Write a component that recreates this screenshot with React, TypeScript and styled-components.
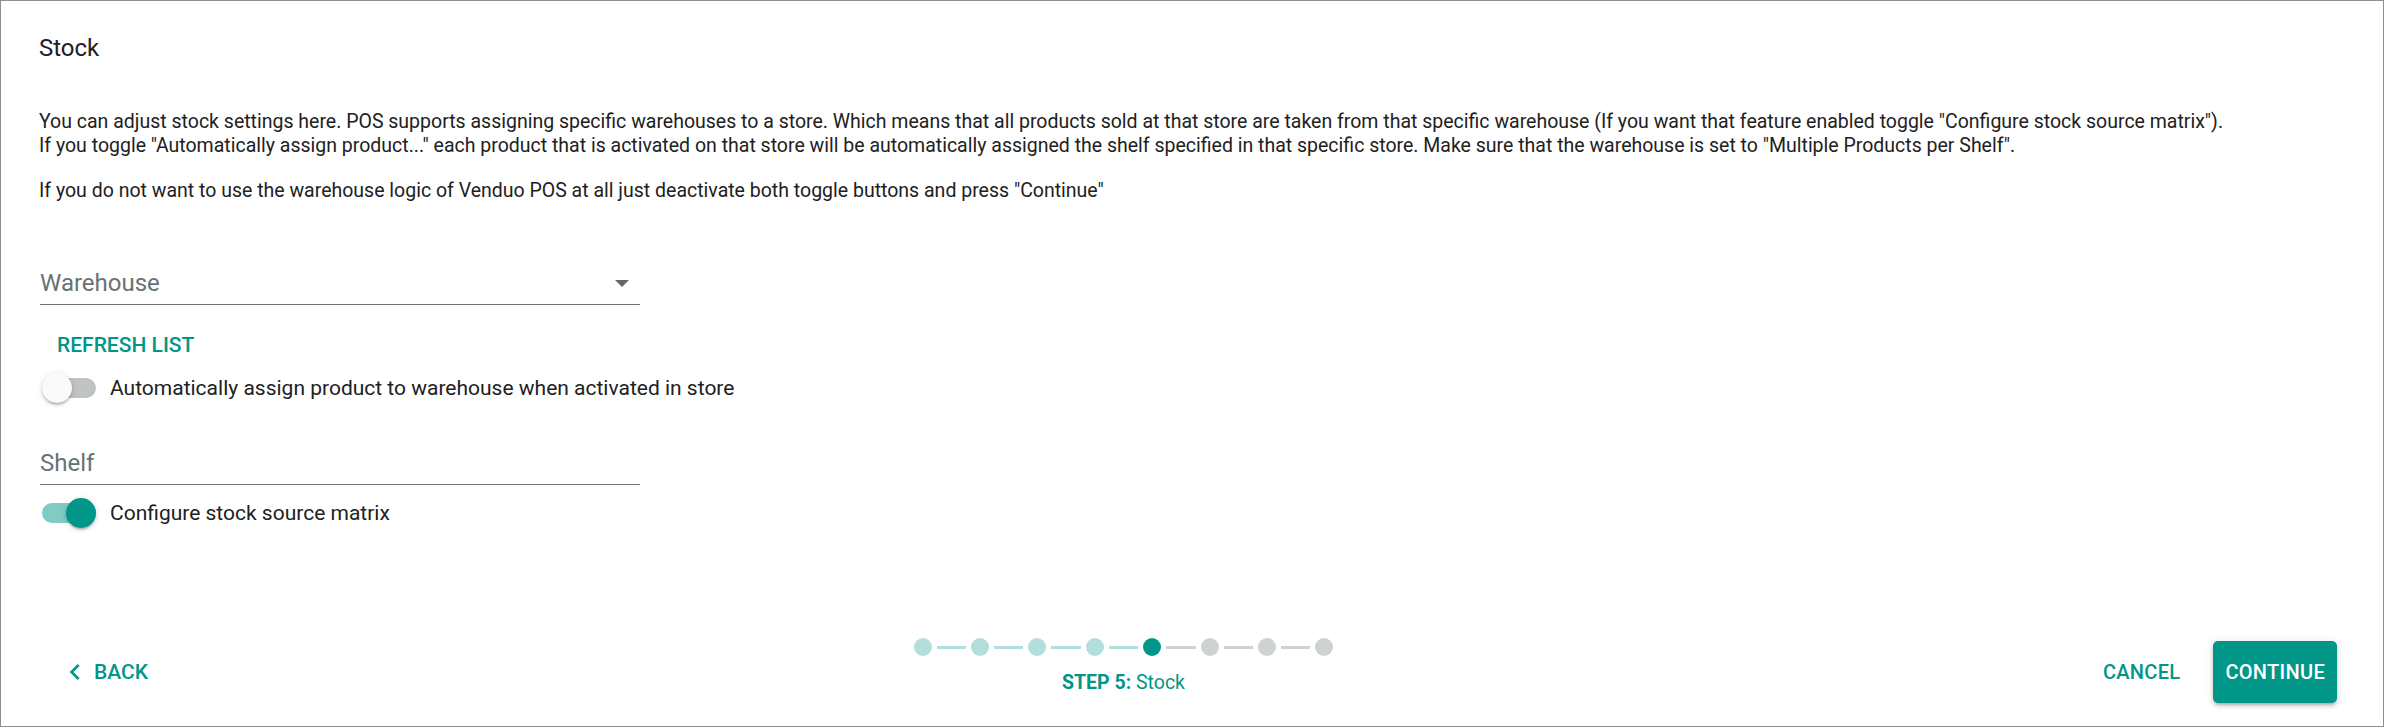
import styled, { createGlobalStyle } from "styled-components";

const GlobalStyle = createGlobalStyle`
    html, body {
        margin: 0;
        padding: 0;
        background: #ffffff;
    }
    body {
        font-family: Roboto, "Noto Sans", "Liberation Sans", sans-serif;
        color: #212121;
    }
    * {
        box-sizing: border-box;
    }
`

const STEPS = 8;
const CURRENT = 5;

const App = () => {
    return (
        <>
            <GlobalStyle />
            <Dialog>
                <Content>
                    <Title>Stock</Title>
                    <Paragraph>
                        You can adjust stock settings here. POS supports assigning specific warehouses to a store. Which means that all products sold at that store are taken from that specific warehouse (If you want that feature enabled toggle "Configure stock source matrix").
                        <br />
                        If you toggle "Automatically assign product..." each product that is activated on that store will be automatically assigned the shelf specified in that specific store. Make sure that the warehouse is set to "Multiple Products per Shelf".
                    </Paragraph>
                    <Paragraph $gap={21}>
                        If you do not want to use the warehouse logic of Venduo POS at all just deactivate both toggle buttons and press "Continue"
                    </Paragraph>

                    <Field $gap={66}>
                        <FieldLabel>Warehouse</FieldLabel>
                        <SelectArrow />
                    </Field>
                    <TextButton>REFRESH LIST</TextButton>
                    <ToggleRow $gap={10}>
                        <Track $on={false}>
                            <Thumb $on={false} />
                        </Track>
                        <ToggleLabel>Automatically assign product to warehouse when activated in store</ToggleLabel>
                    </ToggleRow>

                    <Field $gap={46}>
                        <FieldLabel>Shelf</FieldLabel>
                    </Field>
                    <ToggleRow $gap={13}>
                        <Track $on={true}>
                            <Thumb $on={true} />
                        </Track>
                        <ToggleLabel>Configure stock source matrix</ToggleLabel>
                    </ToggleRow>
                </Content>

                <Footer>
                    <BackButton>
                        <svg width="32" height="32" viewBox="0 0 24 24" fill="#009688">
                            <path d="M15.41 7.41L14 6l-6 6 6 6 1.41-1.41L10.83 12z" />
                        </svg>
                        BACK
                    </BackButton>

                    <Stepper>
                        <Dots>
                            {Array.from({ length: STEPS }).map((_, i) => {
                                const step = i + 1;
                                const state = step < CURRENT ? "done" : step === CURRENT ? "active" : "todo";
                                return (
                                    <DotGroup key={i}>
                                        {i > 0 && <Line $done={step <= CURRENT} />}
                                        <Dot $state={state} />
                                    </DotGroup>
                                );
                            })}
                        </Dots>
                        <StepLabel>
                            <b>STEP {CURRENT}:</b> Stock
                        </StepLabel>
                    </Stepper>

                    <Actions>
                        <TextButton $footer>CANCEL</TextButton>
                        <PrimaryButton>CONTINUE</PrimaryButton>
                    </Actions>
                </Footer>
            </Dialog>
        </>
    );
};

export default App;

const Dialog = styled.div`
    display: flex;
    flex-direction: column;
    width: 100vw;
    height: 100vh;
    border: 1px solid #8e8e8e;
    background: #ffffff;
    overflow: hidden;
`

const Content = styled.div`
    flex: 1;
    display: flex;
    flex-direction: column;
    align-items: flex-start;
    padding: 33px 40px 0 38px;
`

const Title = styled.h2`
    margin: 0;
    font-size: 24px;
    font-weight: 400;
    line-height: 28px;
    color: #212121;
`

const Paragraph = styled.p<{ $gap?: number }>`
    margin: ${(p) => p.$gap ?? 48}px 0 0 0;
    font-size: 19.5px;
    line-height: 24px;
    color: #212121;
`

const Field = styled.div<{ $gap: number }>`
    position: relative;
    display: flex;
    align-items: center;
    justify-content: space-between;
    width: 600px;
    margin-top: ${(p) => p.$gap}px;
    margin-left: 1px;
    padding: 0 11px 7px 0;
    border-bottom: 1px solid #6b7676;
`

const FieldLabel = styled.span`
    font-size: 24px;
    line-height: 28px;
    color: #687272;
`

const SelectArrow = styled.span`
    width: 0;
    height: 0;
    border-left: 7px solid transparent;
    border-right: 7px solid transparent;
    border-top: 7px solid #5f6a6a;
    margin-top: 1px;
`

const TextButton = styled.button<{ $footer?: boolean }>`
    border: none;
    background: transparent;
    font-family: Roboto, "Liberation Sans", sans-serif;
    font-size: ${(p) => (p.$footer ? "20px" : "21px")};
    font-weight: 500;
    letter-spacing: ${(p) => (p.$footer ? "0.3px" : "0")};
    color: #009688;
    height: 36px;
    line-height: 36px;
    padding: 0 12px;
    margin: ${(p) => (p.$footer ? "0 21px 0 0" : "22px 0 0 6px")};
    cursor: pointer;
`

const ToggleRow = styled.div<{ $gap: number }>`
    display: flex;
    align-items: center;
    height: 30px;
    margin-top: ${(p) => p.$gap}px;
    margin-left: 3px;
`

const Track = styled.div<{ $on: boolean }>`
    position: relative;
    width: 54px;
    height: 20px;
    border-radius: 10px;
    background: ${(p) => (p.$on ? "#80cbc4" : "#bfc3c3")};
`

const Thumb = styled.div<{ $on: boolean }>`
    position: absolute;
    top: -5px;
    left: ${(p) => (p.$on ? "24px" : "0")};
    width: 30px;
    height: 30px;
    border-radius: 50%;
    background: ${(p) => (p.$on ? "#009688" : "#fafafa")};
    box-shadow: 0 3px 2px -2px rgba(0, 0, 0, 0.2), 0 2px 3px 0 rgba(0, 0, 0, 0.14), 0 1px 6px 0 rgba(0, 0, 0, 0.12);
`

const ToggleLabel = styled.span`
    margin-left: 14px;
    font-size: 21px;
    line-height: 24px;
    color: #212121;
`

const Footer = styled.div`
    display: flex;
    align-items: center;
    justify-content: space-between;
    height: 108px;
    padding: 0 46px 0 58px;
`

const BackButton = styled.button`
    display: flex;
    align-items: center;
    gap: 3px;
    border: none;
    background: transparent;
    padding: 0 8px 0 0;
    font-family: Roboto, "Liberation Sans", sans-serif;
    font-size: 21px;
    font-weight: 500;
    color: #009688;
    cursor: pointer;
`

const Stepper = styled.div`
    display: flex;
    flex-direction: column;
    align-items: center;
    gap: 16px;
    margin-bottom: 12px;
`

const Dots = styled.div`
    display: flex;
    align-items: center;
`

const DotGroup = styled.div`
    display: flex;
    align-items: center;
`

const Dot = styled.span<{ $state: "done" | "active" | "todo" }>`
    width: 18px;
    height: 18px;
    border-radius: 50%;
    background: ${(p) => (p.$state === "active" ? "#009688" : p.$state === "done" ? "#b2dfdb" : "#cfd2d2")};
`

const Line = styled.span<{ $done: boolean }>`
    width: 29.4px;
    height: 3px;
    margin: 0 5px;
    background: ${(p) => (p.$done ? "#b2dfdb" : "#cfd2d2")};
`

const StepLabel = styled.div`
    font-size: 19.5px;
    line-height: 22px;
    color: #009688;

    b {
        font-weight: 700;
    }
`

const Actions = styled.div`
    display: flex;
    align-items: center;
`

const PrimaryButton = styled.button`
    height: 62px;
    padding: 0 12px;
    border: none;
    border-radius: 5px;
    background: #009688;
    color: #ffffff;
    font-family: Roboto, "Liberation Sans", sans-serif;
    font-size: 20px;
    font-weight: 500;
    letter-spacing: 0.3px;
    box-shadow: 0 3px 3px -2px rgba(0, 0, 0, 0.2), 0 3px 4px 0 rgba(0, 0, 0, 0.14), 0 1px 8px 0 rgba(0, 0, 0, 0.12);
    cursor: pointer;
`
